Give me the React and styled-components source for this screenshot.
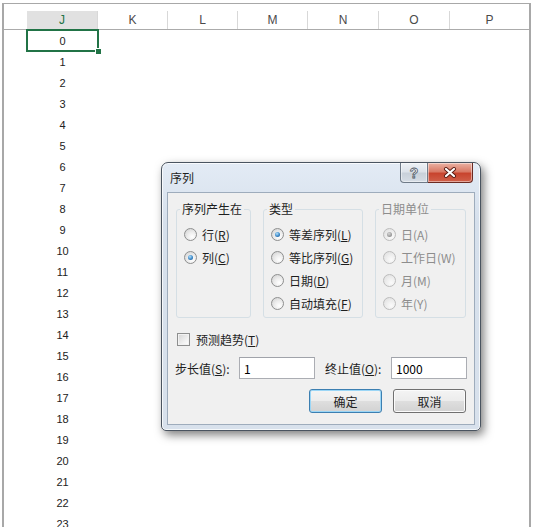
import React from 'react'
import styled, { createGlobalStyle } from 'styled-components'

const GlobalStyle = createGlobalStyle`
  html, body {
    margin: 0;
    padding: 0;
    background: #ffffff;
  }
  body {
    font-family: "Noto Sans CJK SC", "Liberation Sans", sans-serif;
  }
`

const COLS = '23px 71px 70px 70px 70px 71px 71px 1fr'
const UI_FONT = '"Noto Sans CJK SC", "Liberation Sans", sans-serif'

const Screen = styled.div`
  position: relative;
  width: 534px;
  height: 527px;
  overflow: hidden;
  background: #ffffff;
`

const Sheet = styled.div`
  box-sizing: border-box;
  width: 529px;
  height: 524px;
  margin: 3px 0 0 2px;
  padding-top: 7px;
  border: 2px solid #a8a8a8;
  border-top-width: 1px;
  border-bottom: none;
`

const HeaderRow = styled.div`
  display: grid;
  grid-template-columns: ${COLS};
  height: 18px;
  border-bottom: 1px solid #ababab;
`

const ColHead = styled.div`
  display: flex;
  align-items: center;
  justify-content: center;
  font-family: "Liberation Sans", sans-serif;
  font-size: 12px;
  color: ${p => (p.$active ? '#217346' : '#4a4a4a')};
  background: ${p => (p.$active ? '#e1e1e1' : '#ffffff')};
  border-right: ${p => (p.$edge ? 'none' : '1px solid #d8d8d8')};
`

const Row = styled.div`
  display: grid;
  grid-template-columns: ${COLS};
  height: 21px;
`

const Cell = styled.div`
  position: relative;
  display: flex;
  align-items: center;
  justify-content: center;
  font-family: "Liberation Sans", sans-serif;
  font-size: 11px;
  color: #222222;
`

const Selection = styled.div`
  position: absolute;
  left: -1px;
  top: -1px;
  right: -1px;
  bottom: -1px;
  border: 2px solid #217346;
`

const FillHandle = styled.span`
  position: absolute;
  right: -5px;
  bottom: -5px;
  width: 5px;
  height: 5px;
  background: #217346;
  border: 1px solid #ffffff;
`

/* ---- series dialog ---- */

const Dialog = styled.div`
  position: absolute;
  left: 161px;
  top: 162px;
  width: 320px;
  height: 269px;
  box-sizing: border-box;
  display: flex;
  flex-direction: column;
  padding: 0 5px 5px;
  border: 1px solid #4a5460;
  border-radius: 7px 7px 5px 5px;
  background: linear-gradient(#e3ebf5, #d6e0ec 60px, #d8e1ec);
  box-shadow: 3px 4px 10px rgba(0, 0, 0, 0.5), inset 0 0 0 1px rgba(255, 255, 255, 0.75);
  font-family: ${UI_FONT};
  font-size: 12px;
  color: #1e1e1e;
`

const TitleBar = styled.div`
  display: flex;
  align-items: flex-start;
  height: 29px;
`

const Title = styled.div`
  margin: 7px 0 0 3px;
  line-height: 16px;
`

const CaptionButtons = styled.div`
  display: flex;
  margin: 0 2px 0 auto;
`

const CaptionButton = styled.div`
  display: flex;
  align-items: center;
  justify-content: center;
  box-sizing: border-box;
  width: ${p => p.$w}px;
  height: 20px;
  border: 1px solid ${p => (p.$close ? '#6b2a22' : '#6f7b88')};
  border-top: none;
  border-left-width: ${p => (p.$close ? 0 : 1)}px;
  border-radius: ${p => (p.$close ? '0 0 4px 0' : '0 0 0 4px')};
  background: ${p =>
    p.$close
      ? 'linear-gradient(#eab2a4, #d97a66 45%, #c8442e 55%, #d0604a)'
      : 'linear-gradient(#eef2f6, #dde3ea 45%, #c9d1da 55%, #d6dde5)'};
  box-shadow: inset 0 0 0 1px rgba(255, 255, 255, 0.45);
`

const HelpMark = styled.span`
  font-family: "Liberation Sans", sans-serif;
  font-weight: bold;
  font-size: 14px;
  line-height: 1;
  color: #f7f9fb;
  -webkit-text-stroke: 0.8px #4e5864;
`

const Client = styled.div`
  flex: 1;
  display: flex;
  flex-direction: column;
  box-sizing: border-box;
  padding: 8px 8px 0;
  background: #f0f0f0;
  border: 1px solid #9eacbc;
`

const Groups = styled.div`
  display: flex;
  justify-content: space-between;
`

const Group = styled.fieldset`
  box-sizing: border-box;
  width: ${p => p.$w}px;
  height: 117px;
  margin: 0;
  padding: 0;
  border: 1px solid #d5dfe5;
  border-radius: 3px;
  min-inline-size: 0;
`

const GroupTitle = styled.legend`
  margin-left: 3px;
  padding: 0 2px;
  line-height: 16px;
  white-space: nowrap;
  color: ${p => (p.$disabled ? '#8d8d8d' : '#1e1e1e')};
`

const Options = styled.div`
  display: flex;
  flex-direction: column;
  margin-top: 6px;
  padding-left: 7px;
`

const Option = styled.label`
  display: flex;
  align-items: center;
  gap: 5px;
  height: 23px;
  color: ${p => (p.$disabled ? '#8d8d8d' : '#1e1e1e')};
  white-space: nowrap;
`

const RadioMark = styled.span`
  position: relative;
  flex: none;
  box-sizing: border-box;
  width: 13px;
  height: 13px;
  border-radius: 50%;
  border: 1px solid ${p => (p.$disabled ? '#bcbcbc' : '#8e8f8f')};
  background: ${p =>
    p.$disabled
      ? 'radial-gradient(circle at 65% 70%, #fbfbfb, #eeeeee 45%, #dcdcdc)'
      : 'radial-gradient(circle at 65% 70%, #ffffff, #ececec 45%, #cdcdcd)'};

  &::after {
    content: '';
    display: ${p => (p.$checked ? 'block' : 'none')};
    position: absolute;
    left: 3px;
    top: 3px;
    width: 5px;
    height: 5px;
    border-radius: 50%;
    background: ${p =>
      p.$disabled
        ? 'radial-gradient(circle at 40% 35%, #d8d8d8, #9c9c9c 60%, #7d7d7d)'
        : 'radial-gradient(circle at 40% 35%, #b4e1fb, #3b88c8 55%, #17497e)'};
  }
`

const CheckRow = styled.label`
  display: flex;
  align-items: center;
  gap: 6px;
  height: 16px;
  margin: 13px 0 0 1px;
`

const CheckMark = styled.span`
  box-sizing: border-box;
  width: 13px;
  height: 13px;
  border: 1px solid #8e8f8f;
  background: linear-gradient(135deg, #d4d4d4, #f4f4f4 70%, #ffffff);
  box-shadow: inset 0 0 0 1px #f2f2f2;
`

const FieldRow = styled.div`
  display: flex;
  align-items: center;
  margin: 10px 0 0 -1px;
`

const FieldLabel = styled.span`
  flex: none;
  width: ${p => p.$w}px;
  white-space: nowrap;
`

const Field = styled.input`
  flex: none;
  box-sizing: border-box;
  width: 76px;
  height: 22px;
  margin-right: ${p => (p.$last ? 0 : 10)}px;
  padding: 0 4px;
  border: 1px solid #abadb3;
  border-top-color: #a0a3aa;
  background: #ffffff;
  font-family: ${UI_FONT};
  font-size: 12px;
  color: #000000;
  outline: none;
`

const ButtonRow = styled.div`
  display: flex;
  justify-content: flex-end;
  gap: 11px;
  margin-top: 10px;
`

const Button = styled.button`
  box-sizing: border-box;
  width: 73px;
  height: 24px;
  padding: 0;
  border-radius: 3px;
  border: 1px solid ${p => (p.$primary ? '#3c7fb1' : '#707070')};
  background: linear-gradient(#f4f4f4, #ececec 48%, #dedede 52%, #d2d2d2);
  box-shadow: inset 0 0 0 1px ${p => (p.$primary ? '#9bd6f6' : '#fbfbfb')};
  font-family: ${UI_FONT};
  font-size: 12px;
  color: #1e1e1e;
`

const U = styled.span`
  text-decoration: underline;
  text-underline-offset: 1px;
`

const Radio = ({ checked, disabled, children }) => (
  <Option $disabled={disabled}>
    <RadioMark $checked={checked} $disabled={disabled} />
    <span>{children}</span>
  </Option>
)

const CloseGlyph = () => (
  <svg width="14" height="11" viewBox="0 0 14 11">
    <path d="M3 2 L11 9 M11 2 L3 9" stroke="#5a1c14" strokeWidth="4" strokeLinecap="round" />
    <path d="M3 2 L11 9 M11 2 L3 9" stroke="#ffffff" strokeWidth="2.2" strokeLinecap="round" />
  </svg>
)

const columns = ['', 'J', 'K', 'L', 'M', 'N', 'O', 'P']
const rows = Array.from({ length: 24 }, (_, i) => i)

export default function App() {
  return (
    <Screen>
      <GlobalStyle />
      <Sheet>
        <HeaderRow>
          {columns.map((c, i) => (
            <ColHead key={i} $active={c === 'J'} $edge={i === 0 || c === 'P'}>
              {c}
            </ColHead>
          ))}
        </HeaderRow>
        {rows.map(n => (
          <Row key={n}>
            <Cell />
            <Cell>
              {n}
              {n === 0 && (
                <Selection>
                  <FillHandle />
                </Selection>
              )}
            </Cell>
          </Row>
        ))}
      </Sheet>

      <Dialog>
        <TitleBar>
          <Title>序列</Title>
          <CaptionButtons>
            <CaptionButton $w={28}>
              <HelpMark>?</HelpMark>
            </CaptionButton>
            <CaptionButton $w={45} $close>
              <CloseGlyph />
            </CaptionButton>
          </CaptionButtons>
        </TitleBar>
        <Client>
          <Groups>
            <Group $w={75}>
              <GroupTitle>序列产生在</GroupTitle>
              <Options>
                <Radio>行(<U>R</U>)</Radio>
                <Radio checked>列(<U>C</U>)</Radio>
              </Options>
            </Group>
            <Group $w={100}>
              <GroupTitle>类型</GroupTitle>
              <Options>
                <Radio checked>等差序列(<U>L</U>)</Radio>
                <Radio>等比序列(<U>G</U>)</Radio>
                <Radio>日期(<U>D</U>)</Radio>
                <Radio>自动填充(<U>F</U>)</Radio>
              </Options>
            </Group>
            <Group $w={91}>
              <GroupTitle $disabled>日期单位</GroupTitle>
              <Options>
                <Radio checked disabled>日(A)</Radio>
                <Radio disabled>工作日(W)</Radio>
                <Radio disabled>月(M)</Radio>
                <Radio disabled>年(Y)</Radio>
              </Options>
            </Group>
          </Groups>
          <CheckRow>
            <CheckMark />
            <span>预测趋势(<U>T</U>)</span>
          </CheckRow>
          <FieldRow>
            <FieldLabel $w={64}>步长值(<U>S</U>):</FieldLabel>
            <Field value="1" readOnly />
            <FieldLabel $w={66}>终止值(<U>O</U>):</FieldLabel>
            <Field value="1000" readOnly $last />
          </FieldRow>
          <ButtonRow>
            <Button $primary>确定</Button>
            <Button>取消</Button>
          </ButtonRow>
        </Client>
      </Dialog>
    </Screen>
  )
}
